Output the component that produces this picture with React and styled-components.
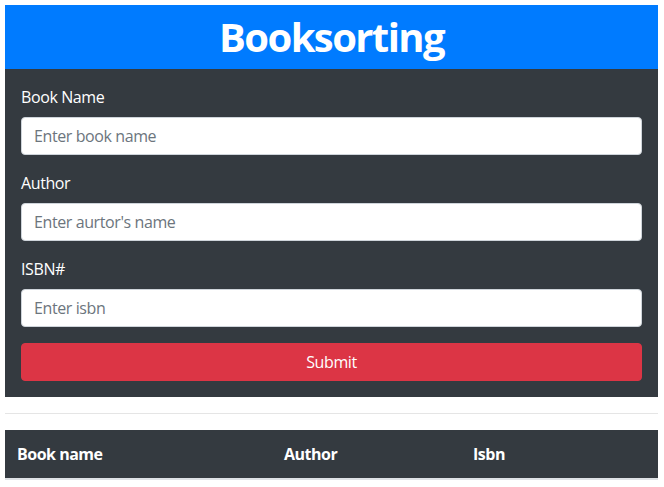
import React from "react";
import styled, { createGlobalStyle } from "styled-components";

const Global = createGlobalStyle`
  * { box-sizing: border-box; }
  body {
    margin: 5px 6px 0 5px;
    font-family: "Open Sans", "Noto Sans", sans-serif;
    font-size: 16px;
    line-height: 1.5;
    letter-spacing: -0.4px;
    color: #212529;
    background: #fff;
  }
`;

const Header = styled.header`
  background: #007bff;
  padding: 8px 0;
`;

const Title = styled.h1`
  margin: 0;
  text-align: center;
  color: #fff;
  font-size: 40px;
  font-weight: 700;
  line-height: 48px;
  letter-spacing: -1.6px;
`;

const FormPanel = styled.form`
  background: #343a40;
  padding: 16px;
  display: flex;
  flex-direction: column;
  gap: 16px;
`;

const Group = styled.div`
  display: flex;
  flex-direction: column;
  gap: 8px;
`;

const Label = styled.label`
  color: #fff;
  font-size: 16px;
  line-height: 24px;
`;

const Input = styled.input`
  height: 38px;
  padding: 6px 12px;
  font: inherit;
  font-size: 16px;
  letter-spacing: -0.4px;
  color: #495057;
  background: #fff;
  border: 1px solid #ced4da;
  border-radius: 4px;
  outline: none;
  &::placeholder { color: #6c757d; }
`;

const SubmitButton = styled.button`
  height: 38px;
  font: inherit;
  font-size: 16px;
  letter-spacing: -0.4px;
  color: #fff;
  background: #dc3545;
  border: 1px solid #dc3545;
  border-radius: 4px;
`;

const Rule = styled.hr`
  margin: 16px 0;
  border: 0;
  border-top: 1px solid rgba(0, 0, 0, 0.1);
`;

const Table = styled.table`
  width: 100%;
  border-collapse: collapse;
  table-layout: fixed;
`;

const Th = styled.th`
  width: ${(p) => p.$w || "auto"};
  background: #343a40;
  color: #fff;
  text-align: left;
  font-weight: 700;
  padding: 12px;
  line-height: 24px;
  letter-spacing: -0.5px;
  border-bottom: 2px solid #dee2e6;
`;

const fields = [
  { label: "Book Name", placeholder: "Enter book name" },
  { label: "Author", placeholder: "Enter aurtor's name" },
  { label: "ISBN#", placeholder: "Enter isbn" },
];

export default function App() {
  return (
    <>
      <Global />
      <Header>
        <Title>Booksorting</Title>
      </Header>
      <FormPanel onSubmit={(e) => e.preventDefault()}>
        {fields.map((f) => (
          <Group key={f.label}>
            <Label>{f.label}</Label>
            <Input placeholder={f.placeholder} />
          </Group>
        ))}
        <SubmitButton type="submit">Submit</SubmitButton>
      </FormPanel>
      <Rule />
      <Table>
        <thead>
          <tr>
            <Th $w="267px">Book name</Th>
            <Th $w="189px">Author</Th>
            <Th>Isbn</Th>
          </tr>
        </thead>
        <tbody />
      </Table>
    </>
  );
}
